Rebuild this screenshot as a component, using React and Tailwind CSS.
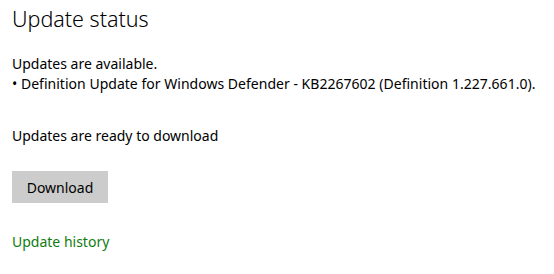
export default function App() {
  return (
    <div className="w-[554px] h-[274px] bg-white pl-3 text-black font-['Noto_Sans',sans-serif] overflow-hidden">
      <h1 className="mt-[5px] text-[21.5px] leading-[28px] font-light">Update status</h1>
      <p className="mt-[21px] text-[14px] leading-[20px]">Updates are available.</p>
      <p className="text-[14px] leading-[20px] tracking-[0.02px]">
        • Definition Update for Windows Defender - KB2267602 (Definition 1.227.661.0).
      </p>
      <p className="mt-[32px] text-[14px] leading-[20px]">Updates are ready to download</p>
      <button className="mt-[25px] w-[96px] h-[32px] bg-[#cccccc] text-[14px] text-black">
        Download
      </button>
      <p className="mt-[29px] text-[14px] leading-[20px] text-[#107c10]">Update history</p>
    </div>
  );
}
